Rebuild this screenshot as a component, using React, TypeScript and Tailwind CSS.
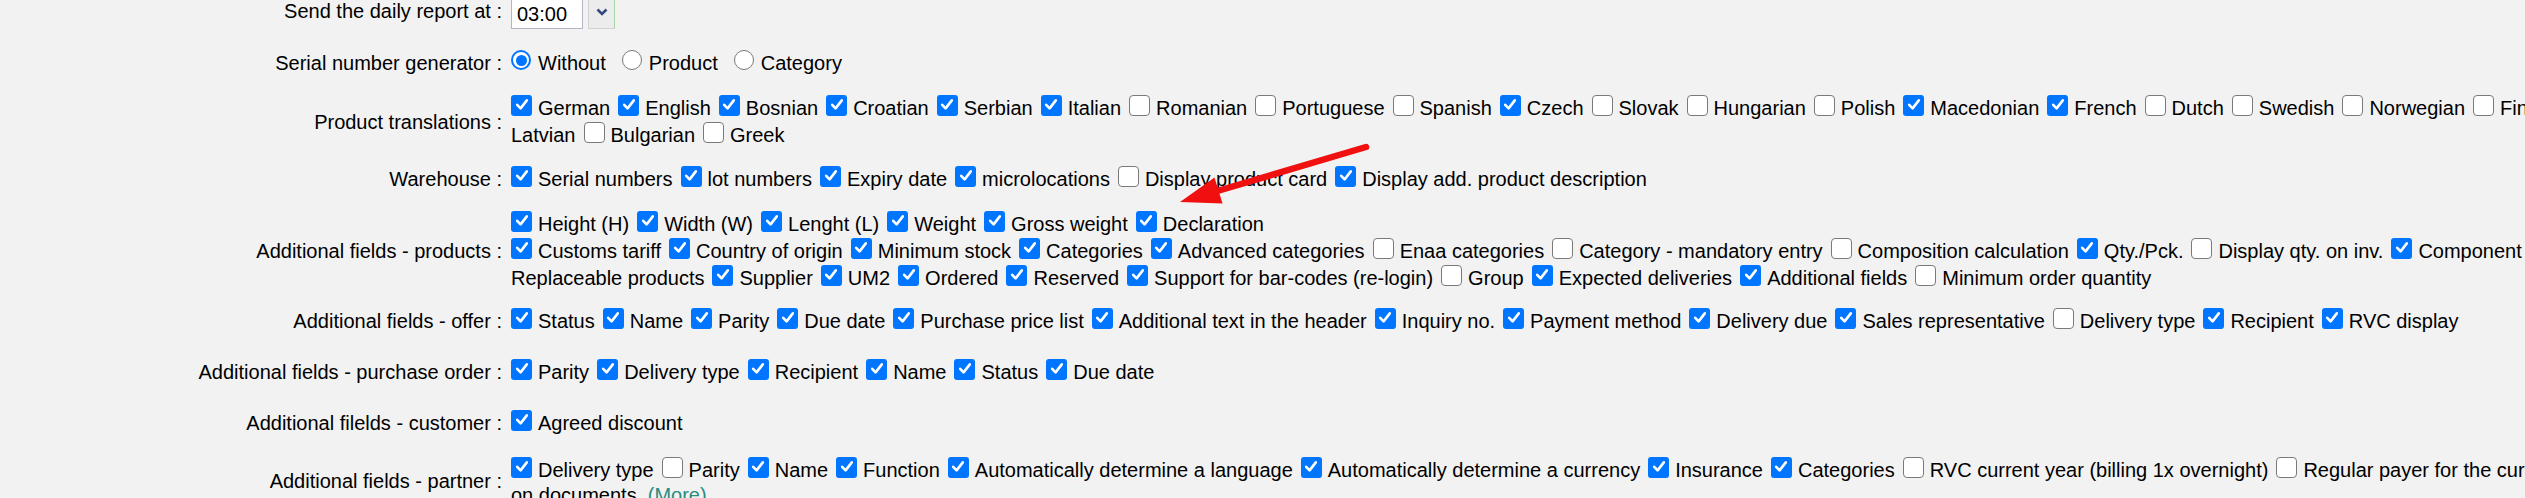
import React from 'react';

type Opt = [string, boolean];

const Check: React.FC<{ on: boolean }> = ({ on }) =>
  on ? (
    <span className="w-[21px] h-[21px] mb-[6px] shrink-0 rounded-[3px] bg-[#0075ff] flex items-center justify-center">
      <svg viewBox="0 0 16 16" className="w-[16px] h-[16px]">
        <path d="M3.2 7.8 L6.6 11.4 L12.8 3.4" fill="none" stroke="#fff" strokeWidth="2.6" strokeLinecap="round" strokeLinejoin="round" />
      </svg>
    </span>
  ) : (
    <span className="w-[21px] h-[21px] mb-[6px] shrink-0 rounded-[4px] bg-white border-[1.5px] border-[#7a7a7a]" />
  );

const Radio: React.FC<{ on: boolean }> = ({ on }) =>
  on ? (
    <span className="w-[20px] h-[20px] mb-[6px] shrink-0 rounded-full border-[2px] border-[#0075ff] bg-white flex items-center justify-center">
      <span className="w-[11px] h-[11px] rounded-full bg-[#0075ff]" />
    </span>
  ) : (
    <span className="w-[20px] h-[20px] mb-[6px] shrink-0 rounded-full border-[1.5px] border-[#7a7a7a] bg-white" />
  );

const Item: React.FC<{ on: boolean; label: string }> = ({ on, label }) => (
  <span className="flex items-center gap-[6px] shrink-0">
    <Check on={on} />
    <span>{label}</span>
  </span>
);

const Line: React.FC<{ opts: Opt[]; lead?: string; tail?: boolean }> = ({ opts, lead, tail }) => (
  <div className="flex items-center h-[27px] gap-[8px] whitespace-nowrap">
    {lead && <span className="shrink-0">{lead}</span>}
    {opts.map(([label, on], i) => (
      <Item key={i} on={on} label={label} />
    ))}
    {tail !== undefined && <Check on={tail} />}
  </div>
);

const Row: React.FC<{ label: string; h: string; mt: string; children: React.ReactNode }> = ({ label, h, mt, children }) => (
  <div className={`flex items-center ${h} ${mt}`}>
    <div className="w-[502px] shrink-0 text-right whitespace-nowrap">{label}</div>
    <div className="ml-[9px] flex flex-col">{children}</div>
  </div>
);

const translations1: Opt[] = [
  ['German', true], ['English', true], ['Bosnian', true], ['Croatian', true], ['Serbian', true],
  ['Italian', true], ['Romanian', false], ['Portuguese', false], ['Spanish', false], ['Czech', true],
  ['Slovak', false], ['Hungarian', false], ['Polish', false], ['Macedonian', true], ['French', true],
  ['Dutch', false], ['Swedish', false], ['Norwegian', false], ['Finnish', false], ['Estonian', false],
];

const products2: Opt[] = [
  ['Customs tariff', true], ['Country of origin', true], ['Minimum stock', true], ['Categories', true],
  ['Advanced categories', true], ['Enaa categories', false], ['Category - mandatory entry', false],
  ['Composition calculation', false], ['Qty./Pck.', true], ['Display qty. on inv.', false], ['Component', true],
];

const products3: Opt[] = [
  ['Supplier', true], ['UM2', true], ['Ordered', true], ['Reserved', true],
  ['Support for bar-codes (re-login)', true], ['Group', false], ['Expected deliveries', true],
  ['Additional fields', true], ['Minimum order quantity', false],
];

const offer: Opt[] = [
  ['Status', true], ['Name', true], ['Parity', true], ['Due date', true], ['Purchase price list', true],
  ['Additional text in the header', true], ['Inquiry no.', true], ['Payment method', true],
  ['Delivery due', true], ['Sales representative', true], ['Delivery type', false], ['Recipient', true],
  ['RVC display', true],
];

const partner: Opt[] = [
  ['Delivery type', true], ['Parity', false], ['Name', true], ['Function', true],
  ['Automatically determine a language', true], ['Automatically determine a currency', true],
  ['Insurance', true], ['Categories', true], ['RVC current year (billing 1x overnight)', false],
  ['Regular payer for the current year', false],
];

export default function App() {
  return (
    <div className="relative w-[2525px] h-[498px] overflow-hidden bg-[#f2f2f2] text-black text-[20px] leading-[22px] font-['Liberation_Sans',Arial,sans-serif]">
      <div className="flex flex-col">
        {/* daily report time */}
        <div className="flex items-center h-[33px] -mt-[4px]">
          <div className="w-[502px] shrink-0 text-right whitespace-nowrap -mt-[3px]">Send the daily report at :</div>
          <div className="ml-[9px] flex items-center gap-[5px] h-full">
            <div className="w-[72px] h-full bg-white border border-[#b3b6c6] flex items-center pl-[5px] pt-[2px]">03:00</div>
            <div className="w-[27px] h-full bg-[#ececec] border border-[#d0d3d0] border-r-[#a8d4a8] flex justify-center pt-[11px]">
              <svg viewBox="0 0 12 8" className="w-[12px] h-[8px]">
                <polyline points="1.5,1.5 6,6 10.5,1.5" fill="none" stroke="#354a7e" strokeWidth="2.6" />
              </svg>
            </div>
          </div>
        </div>

        <Row label="Serial number generator :" h="h-[27px]" mt="mt-[20.5px]">
          <div className="flex items-center h-[27px] gap-[16px] whitespace-nowrap">
            <span className="flex items-center gap-[7px]"><Radio on={true} /><span>Without</span></span>
            <span className="flex items-center gap-[7px]"><Radio on={false} /><span>Product</span></span>
            <span className="flex items-center gap-[7px]"><Radio on={false} /><span>Category</span></span>
          </div>
        </Row>

        <Row label="Product translations :" h="h-[54px]" mt="mt-[18px]">
          <Line opts={translations1} tail={false} />
          <Line lead="Latvian" opts={[['Bulgarian', false], ['Greek', false]]} />
        </Row>

        <Row label="Warehouse :" h="h-[27px]" mt="mt-[17px]">
          <Line
            opts={[
              ['Serial numbers', true], ['lot numbers', true], ['Expiry date', true], ['microlocations', true],
              ['Display product card', false], ['Display add. product description', true],
            ]}
          />
        </Row>

        <Row label="Additional fields - products :" h="h-[81px]" mt="mt-[18px]">
          <Line
            opts={[
              ['Height (H)', true], ['Width (W)', true], ['Lenght (L)', true], ['Weight', true],
              ['Gross weight', true], ['Declaration', true],
            ]}
          />
          <Line opts={products2} tail={true} />
          <Line lead="Replaceable products" opts={products3} />
        </Row>

        <Row label="Additional fields - offer :" h="h-[27px]" mt="mt-[16px]">
          <Line opts={offer} />
        </Row>

        <Row label="Additional fields - purchase order :" h="h-[27px]" mt="mt-[24px]">
          <Line
            opts={[
              ['Parity', true], ['Delivery type', true], ['Recipient', true], ['Name', true],
              ['Status', true], ['Due date', true],
            ]}
          />
        </Row>

        <Row label="Additional filelds - customer :" h="h-[27px]" mt="mt-[24px]">
          <Line opts={[['Agreed discount', true]]} />
        </Row>

        <Row label="Additional fields - partner :" h="h-[49px]" mt="mt-[20px]">
          <Line opts={partner} />
          <div className="h-[22px] flex items-center whitespace-nowrap">
            <span>on documents.&nbsp;<span className="text-[#2a8c80]">(More)</span></span>
          </div>
        </Row>
      </div>

      {/* red annotation arrow */}
      <svg className="absolute left-0 top-0 pointer-events-none" width="2525" height="498">
        <line x1="1366" y1="147" x2="1214" y2="192" stroke="#f01010" strokeWidth="6.5" strokeLinecap="round" />
        <polygon points="1180,202 1222.5,203.5 1214.5,177.5" fill="#f01010" />
      </svg>
    </div>
  );
}
